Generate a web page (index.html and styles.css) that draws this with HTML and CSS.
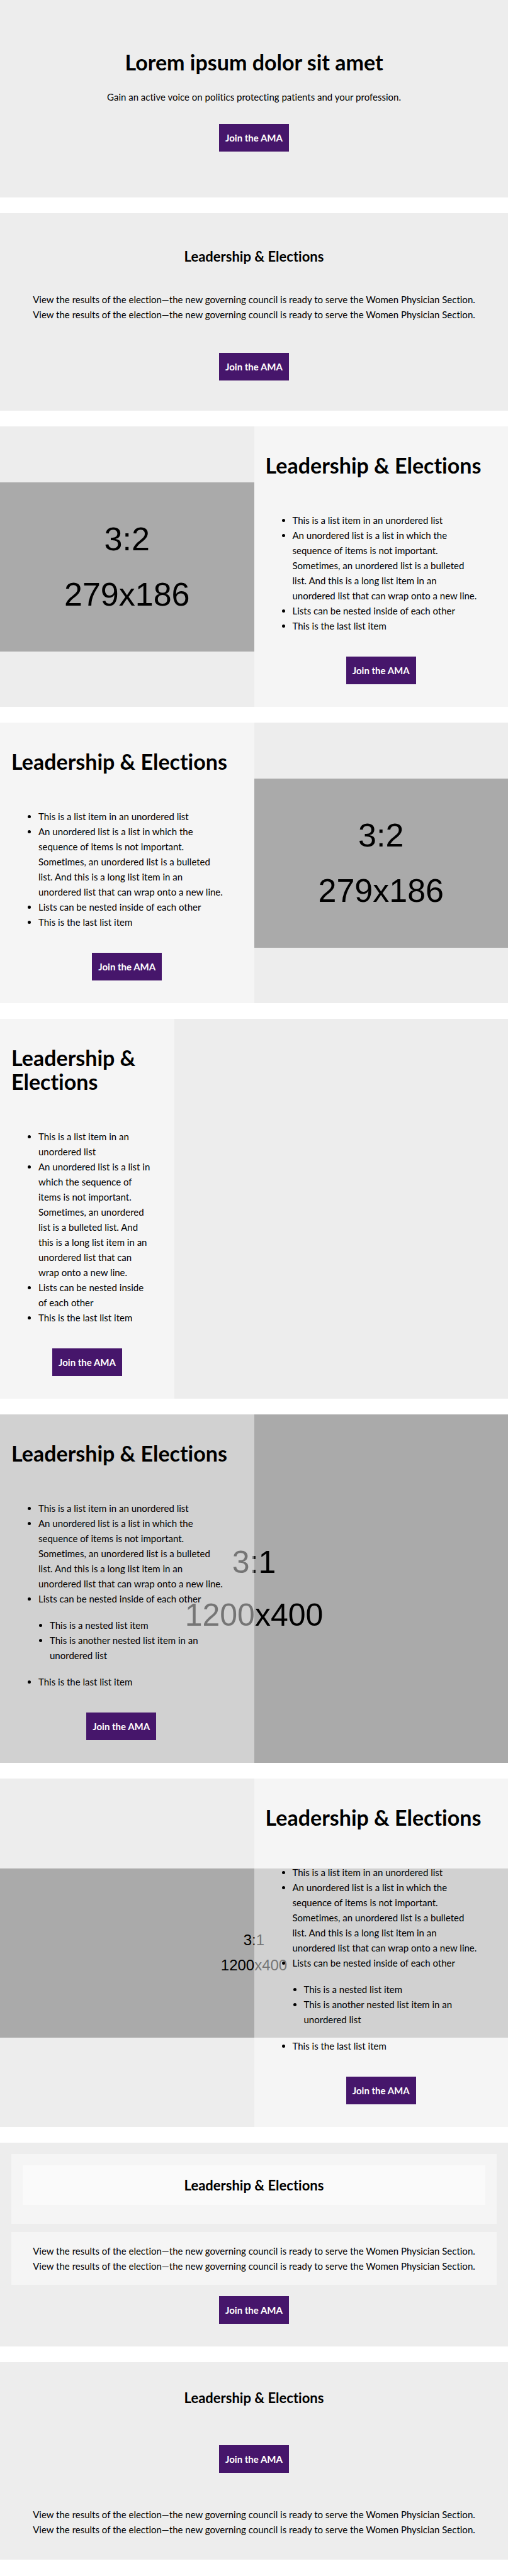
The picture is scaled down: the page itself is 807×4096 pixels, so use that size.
FILE: index.html
```
<!DOCTYPE html>
<html lang="en">
<head>
<meta charset="utf-8">
<meta name="viewport" content="width=device-width, initial-scale=1">
<title>Leadership &amp; Elections</title>
<link rel="stylesheet" href="styles.css">
</head>
<body>
<main class="page">

  <section class="banner banner-hero">
    <h1 class="title">Lorem ipsum dolor sit amet</h1>
    <p class="text">Gain an active voice on politics protecting patients and your profession.</p>
    <a class="button" href="#">Join the AMA</a>
  </section>

  <section class="banner banner-intro">
    <h3 class="subtitle">Leadership &amp; Elections</h3>
    <p class="text">View the results of the election—the new governing council is ready to serve the Women Physician Section.<br>View the results of the election—the new governing council is ready to serve the Women Physician Section.</p>
    <a class="button" href="#">Join the AMA</a>
  </section>

  <section class="split">
    <div class="media">
      <div class="placeholder placeholder-ratio"><span>3:2</span><span>279x186</span></div>
    </div>
    <div class="panel">
      <h2 class="title">Leadership &amp; Elections</h2>
      <ul class="list">
        <li>This is a list item in an unordered list</li>
        <li>An unordered list is a list in which the sequence of items is not important. Sometimes, an unordered list is a bulleted list. And this is a long list item in an unordered list that can wrap onto a new line.</li>
        <li>Lists can be nested inside of each other</li>
        <li>This is the last list item</li>
      </ul>
      <a class="button" href="#">Join the AMA</a>
    </div>
  </section>

  <section class="split">
    <div class="panel">
      <h2 class="title">Leadership &amp; Elections</h2>
      <ul class="list">
        <li>This is a list item in an unordered list</li>
        <li>An unordered list is a list in which the sequence of items is not important. Sometimes, an unordered list is a bulleted list. And this is a long list item in an unordered list that can wrap onto a new line.</li>
        <li>Lists can be nested inside of each other</li>
        <li>This is the last list item</li>
      </ul>
      <a class="button" href="#">Join the AMA</a>
    </div>
    <div class="media">
      <div class="placeholder placeholder-ratio"><span>3:2</span><span>279x186</span></div>
    </div>
  </section>

  <section class="split split-narrow">
    <div class="panel">
      <h2 class="title">Leadership &amp; Elections</h2>
      <ul class="list">
        <li>This is a list item in an unordered list</li>
        <li>An unordered list is a list in which the sequence of items is not important. Sometimes, an unordered list is a bulleted list. And this is a long list item in an unordered list that can wrap onto a new line.</li>
        <li>Lists can be nested inside of each other</li>
        <li>This is the last list item</li>
      </ul>
      <a class="button" href="#">Join the AMA</a>
    </div>
  </section>

  <section class="split">
    <div class="backdrop">
      <div class="placeholder placeholder-cover"><span>3:1</span><span>1200x400</span></div>
    </div>
    <div class="panel panel-inset">
      <h2 class="title">Leadership &amp; Elections</h2>
      <ul class="list">
        <li>This is a list item in an unordered list</li>
        <li>An unordered list is a list in which the sequence of items is not important. Sometimes, an unordered list is a bulleted list. And this is a long list item in an unordered list that can wrap onto a new line.</li>
        <li>Lists can be nested inside of each other
          <ul class="list-nested">
            <li>This is a nested list item</li>
            <li>This is another nested list item in an unordered list</li>
          </ul>
        </li>
        <li>This is the last list item</li>
      </ul>
      <a class="button" href="#">Join the AMA</a>
    </div>
  </section>

  <section class="split split-end">
    <div class="backdrop">
      <div class="placeholder placeholder-contain"><span>3:1</span><span>1200x400</span></div>
    </div>
    <div class="panel">
      <h2 class="title">Leadership &amp; Elections</h2>
      <ul class="list">
        <li>This is a list item in an unordered list</li>
        <li>An unordered list is a list in which the sequence of items is not important. Sometimes, an unordered list is a bulleted list. And this is a long list item in an unordered list that can wrap onto a new line.</li>
        <li>Lists can be nested inside of each other
          <ul class="list-nested">
            <li>This is a nested list item</li>
            <li>This is another nested list item in an unordered list</li>
          </ul>
        </li>
        <li>This is the last list item</li>
      </ul>
      <a class="button" href="#">Join the AMA</a>
    </div>
  </section>

  <section class="banner banner-boxed">
    <div class="box box-title">
      <h3 class="subtitle">Leadership &amp; Elections</h3>
    </div>
    <div class="box box-text">
      <p class="text">View the results of the election—the new governing council is ready to serve the Women Physician Section.<br>View the results of the election—the new governing council is ready to serve the Women Physician Section.</p>
    </div>
    <a class="button" href="#">Join the AMA</a>
  </section>

  <section class="banner banner-closing">
    <h3 class="subtitle">Leadership &amp; Elections</h3>
    <a class="button" href="#">Join the AMA</a>
    <p class="text">View the results of the election—the new governing council is ready to serve the Women Physician Section.<br>View the results of the election—the new governing council is ready to serve the Women Physician Section.</p>
  </section>

</main>
</body>
</html>
```
FILE: styles.css
```
:root {
  --surface: #ededed;
  --veil: rgba(255, 255, 255, 0.46);
  --image: #aaa;
  --purple: #46166b;
}

* {
  box-sizing: border-box;
}

body {
  margin: 0;
  background: #fff;
  color: #000;
  font: 15px/24px Lato, "Open Sans", sans-serif;
  font-variant-ligatures: none;
}

h1, h2, h3, p, ul {
  margin: 0;
}

.page {
  display: flex;
  flex-direction: column;
  gap: 25px;
  padding-bottom: 25px;
}

.title {
  font-size: 34px;
  line-height: 38px;
  font-weight: 700;
}

.subtitle {
  font-size: 22px;
  line-height: 27px;
  font-weight: 700;
}

.button {
  padding: 10px;
  background: var(--purple);
  color: #fff;
  font-weight: 700;
  text-decoration: none;
}

/* Centred banners */

.banner {
  display: flex;
  flex-direction: column;
  align-items: center;
  background: var(--surface);
  text-align: center;
}

.banner-hero {
  padding: 80px 18px 73px;
}

.banner-hero .text {
  margin: 24px 0 31px;
}

.banner-intro {
  padding: 55px 18px 48px;
}

.banner-intro .text {
  margin: 43px 0 49px;
}

.banner-boxed {
  padding: 18px 18px 36px;
}

.banner-closing {
  padding: 43px 18px 36px;
}

.banner-closing .button {
  margin: 62px 0 54px;
}

.box {
  align-self: stretch;
  background: var(--veil);
}

.box-title {
  margin-bottom: 13px;
  padding: 18px 18px 30px;
}

.box-title .subtitle {
  padding: 18px;
  background: var(--veil);
}

.box-text {
  margin-bottom: 18px;
  padding: 18px;
}

/* Two-column sections */

.split {
  position: relative;
  display: grid;
  grid-template-columns: 1fr 1fr;
  background: var(--surface);
}

.split-narrow {
  grid-template-columns: 277fr 530fr;
}

.split-end .panel {
  grid-column: 2;
}

.panel {
  position: relative;
  display: flex;
  flex-direction: column;
  align-items: center;
  padding: 43px 18px 36px;
  background: var(--veil);
}

.panel-inset {
  padding-right: 36px;
}

.panel .title {
  align-self: stretch;
  margin-bottom: 56px;
}

.list {
  align-self: stretch;
  margin-bottom: 37px;
  padding-left: 43px;
  padding-right: 28px;
  list-style: disc;
}

.split-narrow .list {
  padding-right: 14px;
}

.panel-inset .list {
  padding-right: 10px;
}

.list-nested {
  margin: 18px 0;
  padding-left: 18px;
  list-style: disc;
}

/* Image placeholders */

.media {
  display: flex;
  align-items: center;
}

.backdrop {
  position: absolute;
  inset: 0;
  display: flex;
  align-items: center;
}

.placeholder {
  flex: 1;
  display: flex;
  flex-direction: column;
  align-items: center;
  justify-content: center;
  background: var(--image);
  font-family: "Liberation Sans", Arial, sans-serif;
}

.placeholder-ratio {
  aspect-ratio: 3 / 2;
  font-size: 52px;
  line-height: 88px;
}

.placeholder-cover {
  align-self: stretch;
  font-size: 50px;
  line-height: 84px;
}

.placeholder-contain {
  aspect-ratio: 3 / 1;
  font-size: 24px;
  line-height: 40px;
}
```
